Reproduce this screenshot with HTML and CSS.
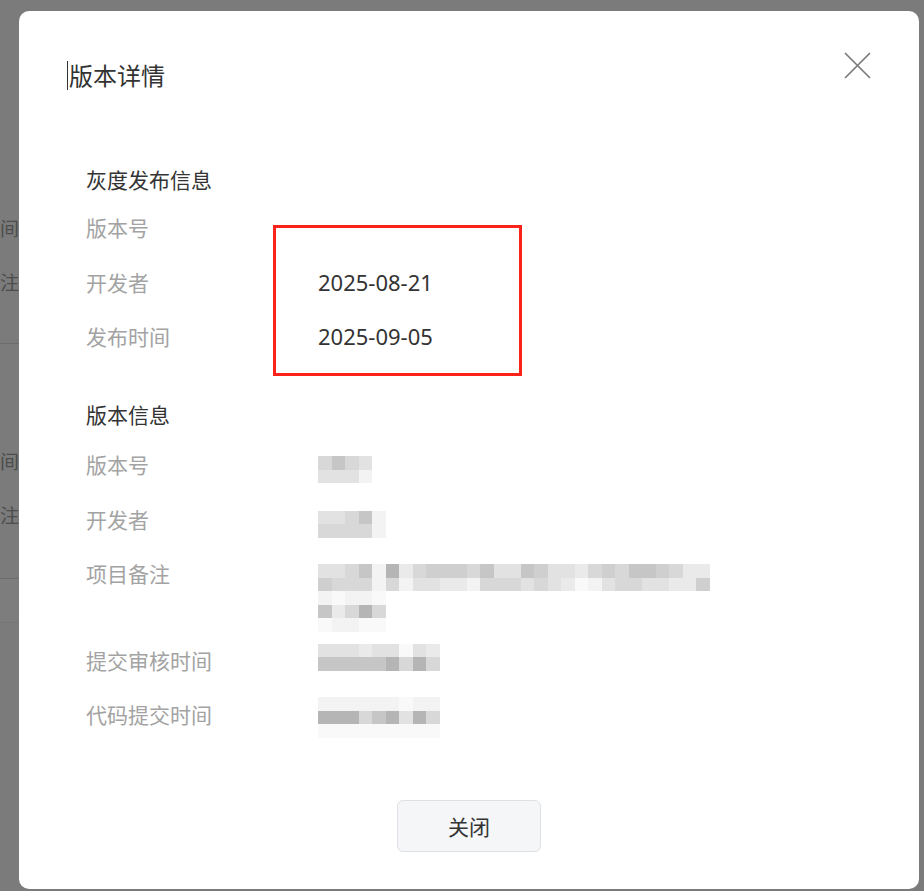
FILE: index.html
```html
<!DOCTYPE html>
<html lang="zh-CN">
<head>
<meta charset="utf-8">
<title>版本详情</title>
<link rel="stylesheet" href="styles.css">
</head>
<body>
<div class="page">
  <div class="bg-block">
    <div class="bg-text">间</div>
    <div class="bg-text">注</div>
  </div>
  <div class="bg-block bg-block-2">
    <div class="bg-text">间</div>
    <div class="bg-text">注</div>
  </div>
  <div class="bg-band"></div>
</div>

<div class="dialog">
  <div class="dialog-header">
    <div class="dialog-title"><span class="caret"></span>版本详情</div>
    <button class="close-btn" aria-label="关闭">
      <svg width="27" height="27" viewBox="0 0 27 27"><path d="M1 1 L26 26 M26 1 L1 26" stroke="#7a7a7a" stroke-width="1.7" fill="none"/></svg>
    </button>
  </div>

  <div class="dialog-body">
    <section class="section">
      <h3 class="section-title">灰度发布信息</h3>
      <div class="rows">
        <div class="row"><div class="label">版本号</div><div class="value"></div></div>
        <div class="row"><div class="label">开发者</div><div class="value">2025-08-21</div></div>
        <div class="row"><div class="label">发布时间</div><div class="value">2025-09-05</div></div>
      </div>
    </section>

    <section class="section section-2">
      <h3 class="section-title">版本信息</h3>
      <div class="rows">
        <div class="row"><div class="label">版本号</div>
          <div class="value"><div class="mosaic cols-4 off-8">
            <i class="m4"></i><i class="m2"></i><i class="m4"></i><i class="m5"></i>
            <i class="m5"></i><i class="m5"></i><i class="m5"></i><i class="m7"></i>
          </div></div>
        </div>
        <div class="row"><div class="label">开发者</div>
          <div class="value"><div class="mosaic cols-5 off-8">
            <i class="m5"></i><i class="m5"></i><i class="m4"></i><i class="m2"></i><i class="m7"></i>
            <i class="m4"></i><i class="m4"></i><i class="m4"></i><i class="m4"></i><i class="m7"></i>
          </div></div>
        </div>
        <div class="row row-tall"><div class="label">项目备注</div>
          <div class="value">
            <div class="mosaic cols-29 off-7">
              <i class="m5"></i><i class="m5"></i><i class="m4"></i><i class="m2"></i><i class="m7"></i><i class="m1"></i><i class="m6"></i><i class="m4"></i><i class="m3"></i><i class="m3"></i><i class="m3"></i><i class="m4"></i><i class="m2"></i><i class="m5"></i><i class="m5"></i><i class="m2"></i><i class="m3"></i><i class="m5"></i><i class="m5"></i><i class="m6"></i><i class="m4"></i><i class="m3"></i><i class="m4"></i><i class="m2"></i><i class="m2"></i><i class="m3"></i><i class="m4"></i><i class="m6"></i><i class="m6"></i>
              <i class="m3"></i><i class="m4"></i><i class="m4"></i><i class="m4"></i><i class="m7"></i><i class="m4"></i><i class="m7"></i><i class="m5"></i><i class="m5"></i><i class="m6"></i><i class="m6"></i><i class="m7"></i><i class="m4"></i><i class="m4"></i><i class="m4"></i><i class="m5"></i><i class="m4"></i><i class="m5"></i><i class="m6"></i><i class="m8"></i><i class="m7"></i><i class="m5"></i><i class="m4"></i><i class="m4"></i><i class="m5"></i><i class="m5"></i><i class="m6"></i><i class="m6"></i><i class="m3"></i>
            </div>
            <div class="mosaic cols-5">
              <i class="m7"></i><i class="m8"></i><i class="m7"></i><i class="m7"></i><i class="m8"></i>
              <i class="m2"></i><i class="m6"></i><i class="m4"></i><i class="m1"></i><i class="m4"></i>
              <i class="m8"></i><i class="m7"></i><i class="m7"></i><i class="m8"></i><i class="m8"></i>
            </div>
          </div>
        </div>
        <div class="row"><div class="label">提交审核时间</div>
          <div class="value"><div class="mosaic cols-9 off-0">
            <i class="m5"></i><i class="m5"></i><i class="m5"></i><i class="m6"></i><i class="m5"></i><i class="m5"></i><i class="m8"></i><i class="m5"></i><i class="m6"></i>
            <i class="m2"></i><i class="m2"></i><i class="m2"></i><i class="m2"></i><i class="m2"></i><i class="m1"></i><i class="m4"></i><i class="m1"></i><i class="m4"></i>
          </div></div>
        </div>
        <div class="row"><div class="label">代码提交时间</div>
          <div class="value"><div class="mosaic cols-9 off-n1">
            <i class="m7"></i><i class="m7"></i><i class="m7"></i><i class="m7"></i><i class="m7"></i><i class="m7"></i><i class="m8"></i><i class="m7"></i><i class="m7"></i>
            <i class="m1"></i><i class="m1"></i><i class="m1"></i><i class="m4"></i><i class="m2"></i><i class="m1"></i><i class="m5"></i><i class="m1"></i><i class="m4"></i>
            <i class="m8"></i><i class="m8"></i><i class="m8"></i><i class="m8"></i><i class="m8"></i><i class="m8"></i><i class="m8"></i><i class="m8"></i><i class="m8"></i>
          </div></div>
        </div>
      </div>
    </section>

    <div class="dialog-footer">
      <button class="btn">关闭</button>
    </div>
  </div>

  <div class="highlight-box"></div>
</div>
</body>
</html>
```

FILE: styles.css
```css
* { box-sizing: border-box; }

html, body {
  margin: 0;
  padding: 0;
  width: 924px;
  height: 891px;
  overflow: hidden;
}

body {
  background: #7b7b7b;
  font-family: "Noto Sans", "Noto Sans CJK SC", sans-serif;
  position: relative;
}

/* ---- underlying page (masked) ---- */
.page {
  padding-top: 212px;
  width: 19px;
}
.bg-block {
  display: flex;
  flex-direction: column;
  gap: 22px;
  height: 132px;
  border-bottom: 1px solid #6c6c6c;
}
.bg-block-2 {
  padding-top: 101px;
  height: 235px;
}
.bg-text {
  font-family: "Noto Sans CJK SC", sans-serif;
  font-size: 19px;
  line-height: 32px;
  color: #4c4c4c;
  white-space: nowrap;
}
.bg-band {
  height: 44px;
  border-bottom: 1px solid #757575;
  background: #7d7d7d;
}

/* ---- dialog ---- */
.dialog {
  position: absolute;
  left: 19px;
  top: 11px;
  width: 900px;
  height: 878px;
  background: #ffffff;
  border-radius: 10px;
}

.dialog-header {
  display: flex;
  justify-content: space-between;
  align-items: flex-start;
  padding: 41px 48px 0 48px;
}
.dialog-title {
  margin-top: 7px;
  font-family: "Noto Sans CJK SC", sans-serif;
  font-size: 24px;
  line-height: 32px;
  color: #333333;
  display: flex;
  align-items: center;
}
.caret {
  display: inline-block;
  width: 1px;
  height: 29px;
  background: #333;
  margin-right: 1px;
}
.close-btn {
  width: 27px;
  height: 27px;
  padding: 0;
  border: 0;
  background: transparent;
  display: block;
}
.close-btn svg { display: block; }

.dialog-body {
  padding: 72px 67px 0 67px;
}

.section-title {
  margin: 0 0 16px 0;
  font-family: "Noto Sans CJK SC", sans-serif;
  font-weight: normal;
  font-size: 21px;
  line-height: 32px;
  color: #333333;
}
.section-2 { margin-top: 46px; }
.section-2 .section-title { margin-bottom: 18px; }

.rows {
  display: flex;
  flex-direction: column;
  gap: 22.5px;
}
.row {
  display: flex;
  height: 32px;
}
.row-tall { height: 64px; }
.label {
  width: 232px;
  flex: none;
  font-family: "Noto Sans CJK SC", sans-serif;
  font-size: 21px;
  line-height: 32px;
  color: #a3a3a3;
}
.value {
  font-family: "Noto Sans", "Noto Sans CJK SC", sans-serif;
  font-size: 22px;
  line-height: 32px;
  color: #333333;
}

/* mosaic (pixelated placeholder) */
.mosaic {
  display: grid;
  grid-auto-rows: 13.5px;
}
.cols-4 { grid-template-columns: repeat(4, 13.5px); }
.cols-5 { grid-template-columns: repeat(5, 13.5px); }
.cols-9 { grid-template-columns: repeat(9, 13.5px); }
.cols-29 { grid-template-columns: repeat(29, 13.5px); }
.off-8 { margin-top: 8px; }
.off-7 { margin-top: 7px; }
.off-0 { margin-top: 0; }
.off-n1 { margin-top: -1px; }
.mosaic i { display: block; }
.m1 { background: #b5b5b5; }
.m2 { background: #c6c6c6; }
.m3 { background: #cfcfcf; }
.m4 { background: #d8d8d8; }
.m5 { background: #e2e2e2; }
.m6 { background: #eaeaea; }
.m7 { background: #f3f3f3; }
.m8 { background: #f9f9f9; }

.dialog-footer {
  display: flex;
  justify-content: center;
  margin-top: 70px;
}
.btn {
  width: 144px;
  height: 52px;
  background: #f5f6f8;
  border: 1px solid #dfe1e5;
  border-radius: 6px;
  font-family: "Noto Sans CJK SC", sans-serif;
  font-size: 21px;
  color: #333333;
  padding: 0;
}

.highlight-box {
  position: absolute;
  left: 254px;
  top: 214px;
  width: 249px;
  height: 151px;
  border: 3px solid #fa2219;
}
```
